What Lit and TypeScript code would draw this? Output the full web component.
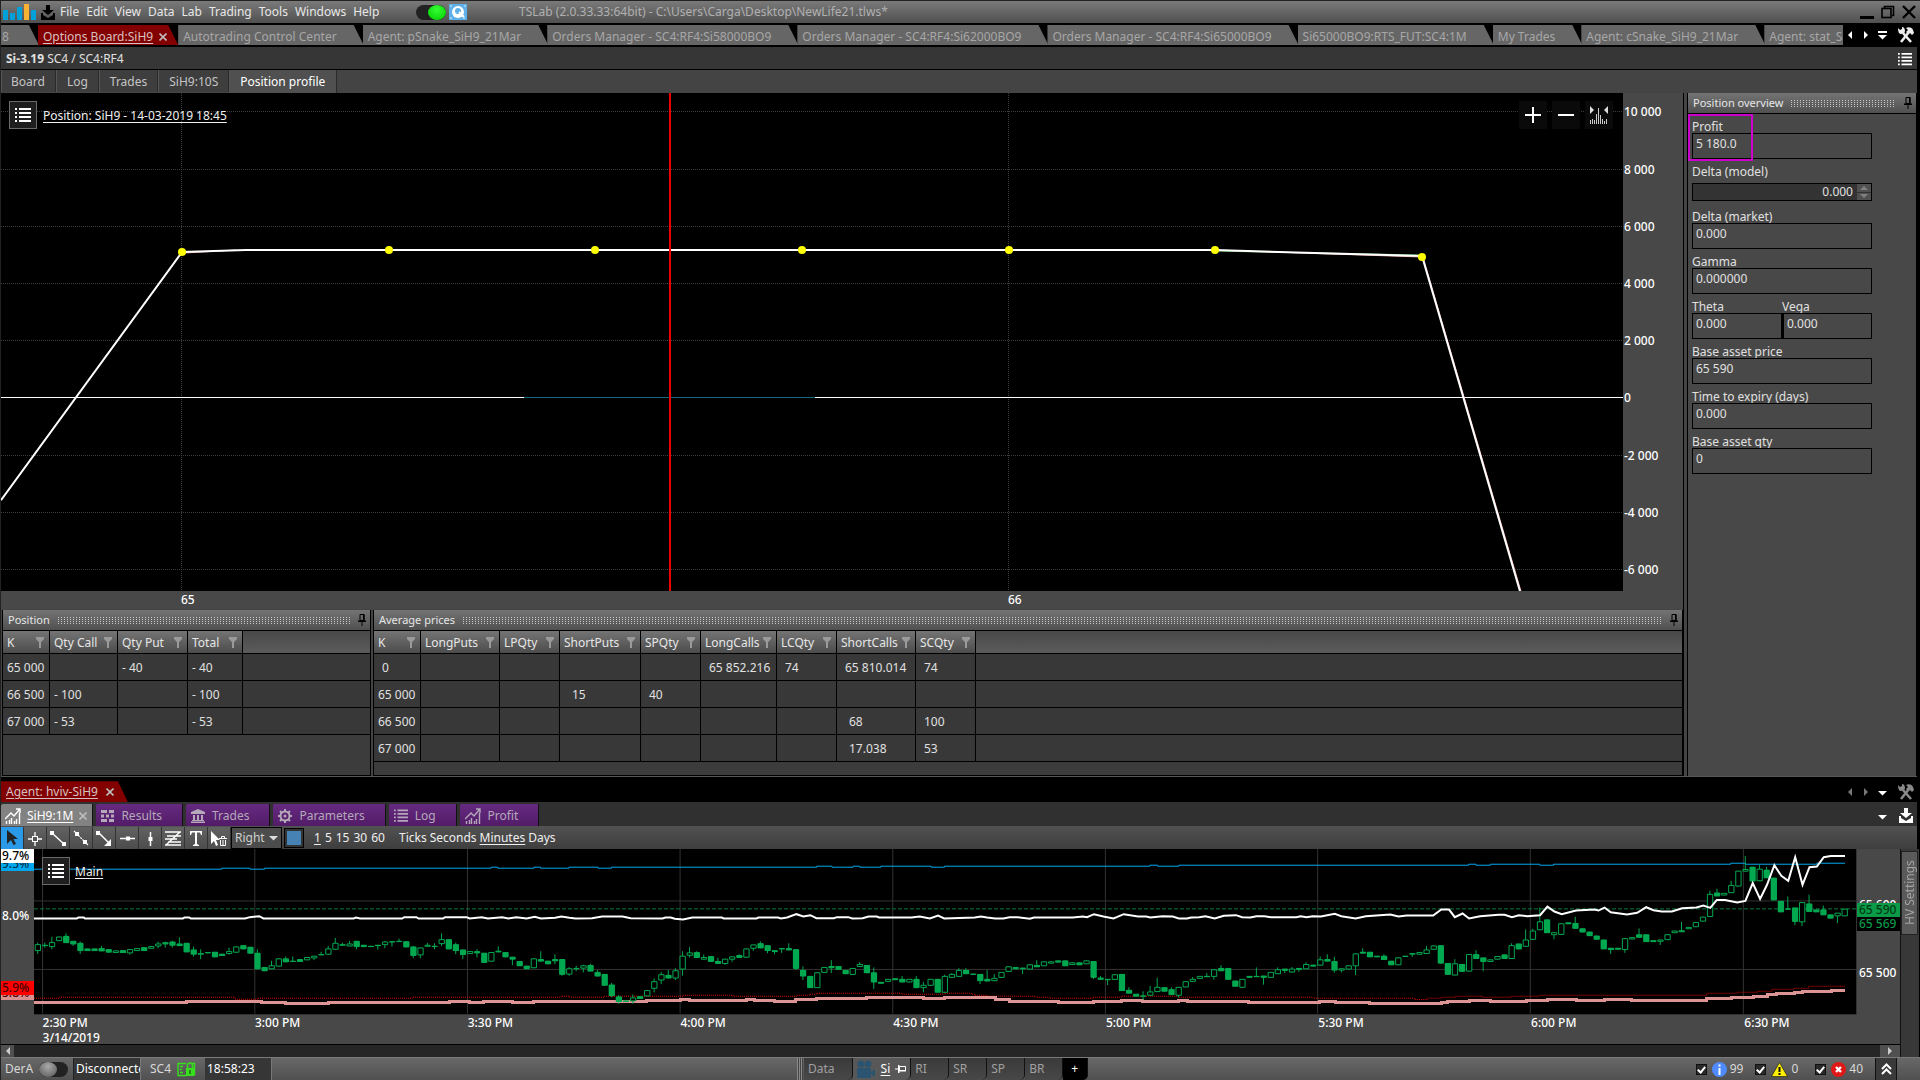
import { LitElement, html, svg, css, nothing } from "lit";
import { customElement, state } from "lit/decorators.js";
import { classMap } from "lit/directives/class-map.js";
import { styleMap } from "lit/directives/style-map.js";

/* ---------- icons ---------- */

const icon = (name: string, w: number, h: number, body: unknown, box = `0 0 ${w} ${h}`) =>
  html`<svg class="ic ic-${name}" width=${w} height=${h} viewBox=${box} aria-hidden="true">${body}</svg>`;

const icons = {
  logo: () => icon("logo", 33, 20, svg`
    <rect x="0" y="8" width="5" height="10" fill="#00a0d8"/>
    <rect x="7" y="11" width="5" height="7" fill="#00a0d8"/>
    <rect x="14" y="5" width="5" height="13" fill="#00a0d8"/>
    <rect x="21" y="2" width="5" height="16" fill="#f9b233"/>
    <rect x="28" y="8" width="5" height="10" fill="#00a0d8"/>`),
  save: (c: string) => icon("save", 14, 15, svg`
    <path fill=${c} d="M5 0h4v5h4L7 10 1 5h4zM0 8h2v2l5 3 5-3V8h2v7H0z"/>`),
  camera: () => icon("camera", 18, 16, svg`
    <rect width="18" height="16" fill="#5fb0e8"/>
    <circle cx="9" cy="8" r="6" fill="#fff"/><circle cx="9" cy="7" r="3" fill="#5fb0e8"/>
    <path d="M10 8l5 5" stroke="#fff" stroke-width="2"/>
    <path d="M1 2h2M15 2h2M1 14h2M14 14h2" stroke="#d8eefc"/>`),
  close: () => icon("close", 8, 8, svg`<path d="M0.5 0.5l7 7M7.5 0.5l-7 7" stroke="#bdbdbd" stroke-width="1.6"/>`),
  min: () => icon("min", 14, 14, svg`<rect y="11" width="14" height="3" fill="#000"/>`),
  restore: () => icon("restore", 14, 14, svg`
    <path d="M3.5 3V1.5h9v9H11" fill="none" stroke="#000" stroke-width="1.6"/>
    <rect x="1" y="3.5" width="9" height="9" fill="none" stroke="#000" stroke-width="1.6"/>`),
  exit: () => icon("exit", 14, 14, svg`<path d="M1 1l12 12M13 1L1 13" stroke="#000" stroke-width="2.4"/>`),
  left: (c: string) => icon("left", 4, 8, svg`<path d="M4 0v8L0 4z" fill=${c}/>`),
  right: (c: string) => icon("right", 4, 8, svg`<path d="M0 0v8l4-4z" fill=${c}/>`),
  down: (c: string, bar = false) => icon("down", 9, 9, svg`
    ${bar ? svg`<rect y="0" width="9" height="2" fill=${c}/>` : nothing}
    <path d="M0 4h9L4.500 8.500z" fill=${c}/>`),
  tools: (c: string) => icon("tools", 18, 16, svg`
    <path d="M6 6l8 9" stroke=${c} stroke-width="2.6"/>
    <path d="M12 5L4 15" stroke=${c} stroke-width="2.6"/>
    <path d="M1 1l2 2 2-1V0c2 0 3 2 3 4S6 7 4 7 1 5 1 1z" fill=${c}/>
    <path d="M9 1c3-1.500 6-.5 7 2l1 3-2 2-2-2-2 1-2-2 2-2z" fill=${c}/>`),
  list: (c: string, w = 16, h = 14) => icon("list", w, h, svg`
    <path fill=${c} d="M0 0h2v2H0zM4 0h12v2H4zM0 4h2v2H0zM4 4h12v2H4zM0 8h2v2H0zM4 8h12v2H4zM0 12h2v2H0zM4 12h12v2H4z"/>`, "0 0 16 14"),
  pin: () => icon("pin", 8, 12, svg`
    <path d="M2 .5h4v6H2z" fill="none" stroke="#000"/><path d="M5 0h1.500v7H5zM0 6.500h8v1.500H0zM3.500 8h1v4h-1z" fill="#000"/>`),
  pinSide: () => icon("pinSide", 11, 8, svg`
    <path d="M4.500 1.500h6v4h-6z" fill="none" stroke="#fff"/><path d="M4 5h7v1.500H4zM3 0h1.500v8H3zM0 3.500h3v1H0z" fill="#fff"/>`),
  funnel: () => icon("funnel", 8, 11, svg`<path d="M0 0h8v2L5 5v6H3V5L0 2z" fill="#9a9a9a"/>`),
  plus: () => icon("plus", 16, 16, svg`<path d="M7 0h2v7h7v2H9v7H7V9H0V7h7z" fill="#fff"/>`),
  minus: () => icon("minus", 16, 16, svg`<path d="M0 7h16v2H0z" fill="#fff"/>`),
  fit: () => icon("fit", 18, 18, svg`
    <path d="M0 0v8l4-4zM18 0v8l-4-4z" fill="#ddd"/>
    <path d="M.5 18v-4M2.500 18v-5M4.500 18v-4M6.500 18V8M8.500 18V2M10.500 18V9M12.500 18v-5M14.500 18v-3M16.500 18v-5" stroke="#ccc"/>`),
  chart: (c: string) => icon("chart", 16, 16, svg`
    <path d="M0 11l6-6 3 3 6-7M11 1h4v4" fill="none" stroke=${c} stroke-width="1.400"/>
    <path d="M1.500 16v-3M4.500 16v-4M6.500 16v-6M9.500 16v-3M11.500 16v-5M14.500 16V5" stroke=${c} stroke-width="1.400"/>`),
  blocks: () => icon("blocks", 13, 12, svg`
    <path fill="#b4a8ba" d="M0 0h6v3H0zM8 0h5v3H8zM0 4.500h3v3H0zM5 4.500h3v3H5zM10 4.500h3v3h-3zM0 9h6v3H0zM8 9h5v3H8z"/>`),
  bank: () => icon("bank", 14, 14, svg`
    <path fill="#b4a8ba" d="M7 0l7 3v2H0V3zM2 6h2v5H2zM6 6h2v5H6zM10 6h2v5h-2zM1 11h12v1H1zM0 12.500h14V14H0z"/>`),
  gear: () => icon("gear", 14, 14, svg`
    <circle cx="7" cy="7" r="4.500" fill="none" stroke="#b4a8ba" stroke-width="2"/><circle cx="7" cy="7" r="1.500" fill="#b4a8ba"/>
    <path d="M7 0v3M7 11v3M0 7h3M11 7h3M2 2l2 2M10 10l2 2M12 2l-2 2M4 10l-2 2" stroke="#b4a8ba" stroke-width="2"/>`),
  film: () => icon("film", 20, 18, svg`
    <circle cx="5" cy="4" r="3.500" fill="#2a5470"/><circle cx="12" cy="4" r="3.500" fill="#2a5470"/>
    <path d="M1 8h14v10H1zM15 12l4-3v8l-4-3z" fill="#2a5470"/>`),
  lock: () => icon("lock", 19, 15, svg`
    <path d="M9 1.500H1v12h8M3 4.500h3M3 7.500h2M3 10.500h3M17.500 13.500V1.500H15" fill="none" stroke="#37e01c" stroke-width="1.400"/>
    <path d="M9 6h8v8H9z" fill="#37e01c"/><path d="M10.500 6V3.500C10.500 0 15.500 0 15.500 3.500V6" fill="none" stroke="#37e01c" stroke-width="1.500"/>
    <path d="M13 8v4" stroke="#222"/>`),
  info: () => icon("info", 15, 15, svg`
    <circle cx="7.500" cy="7.500" r="7.500" fill="#4f8bff"/><path d="M6.500 2.500h2v2h-2zM6.500 6h2v7h-2z" fill="#fff"/>`),
  warn: () => icon("warn", 17, 15, svg`
    <path d="M8.500 0.500L16.500 14.500H.5z" fill="#ffef00" stroke="#111" stroke-width=".6"/><path d="M7.500 5h2v5h-2zM7.500 11h2v2h-2z" fill="#111"/>`),
  error: () => icon("error", 15, 15, svg`
    <circle cx="7.500" cy="7.500" r="7.500" fill="#e01818"/><path d="M5 5l5 5M10 5l-5 5" stroke="#fff" stroke-width="2.400"/>`),
  up: () => icon("up", 11, 12, svg`<path d="M1 6l4.500-4.500L10 6M1 11l4.500-4.500L10 11" fill="none" stroke="#fff" stroke-width="2"/>`),
};

const drawTools = [
  ["Select", svg`<path d="M6 3v14l4-4 2.500 5 2.500-1-2.500-5H17z" fill="#222"/>`],
  ["Crosshair", svg`<path d="M11 5v4M11 15v4M4 12h4M14 12h4" stroke="#fff" stroke-width="1.300"/><rect x="8.500" y="9.500" width="5" height="5" fill="none" stroke="#fff"/>`],
  ["Segment", svg`<path d="M5 6l13 12" stroke="#fff" stroke-width="1.500"/><path d="M3 4h4v4H3zM15 15h4v4h-4z" fill="#fff"/>`],
  ["Line", svg`<path d="M4 4l14 14" stroke="#fff" stroke-width="1.200" stroke-dasharray="2 1"/><path d="M5 5h4v4H5zM13 13h4v4h-4z" fill="#fff"/>`],
  ["Ray", svg`<path d="M5 5l12 12" stroke="#fff" stroke-width="1.500"/><path d="M3 4h4v4H3zM18 12v7h-7z" fill="#fff"/>`],
  ["Horizontal line", svg`<path d="M4 11.500h15" stroke="#fff" stroke-width="1.500"/><rect x="10" y="9.500" width="4" height="4" fill="#fff"/>`],
  ["Vertical line", svg`<path d="M11.500 5v14" stroke="#fff" stroke-width="1.500"/><rect x="9.500" y="10" width="4" height="4" fill="#fff"/>`],
  ["Fibonacci", svg`<path d="M3 5h16M5 9h14M3 12h12M6 15h13M3 18h16M4 18L18 5" stroke="#fff" stroke-width="1.500"/>`],
  ["Text", svg`<path d="M5 4h12v4h-1l-1-2.500h-3V17l2 1v1H8v-1l2-1V5.500H7L6 8H5z" fill="#fff"/>`],
  ["Delete drawings", svg`<path d="M3 4v13l3-3 2 5 2-1-2-5h4z" fill="#fff"/><path d="M11 11.500h8M13.500 11V9.500h3V11M12.500 13v5.500h5V13M15 13v5" fill="none" stroke="#fff"/>`],
] as const;

/* ---------- data ---------- */

const menus = ["File", "Edit", "View", "Data", "Lab", "Trading", "Tools", "Windows", "Help"];
const docTabs = [
  "8", "Options Board:SiH9", "Autotrading Control Center", "Agent: pSnake_SiH9_21Mar",
  "Orders Manager - SC4:RF4:Si58000BO9", "Orders Manager - SC4:RF4:Si62000BO9",
  "Orders Manager - SC4:RF4:Si65000BO9", "Si65000BO9:RTS_FUT:SC4:1M", "My Trades",
  "Agent: cSnake_SiH9_21Mar", "Agent: stat_SiH9",
];
const boardTabs = ["Board", "Log", "Trades", "SiH9:10S", "Position profile"];

const positionCols: [string, string][] = [["K", "w46"], ["Qty Call", "w68"], ["Qty Put", "w70"], ["Total", "w55"]];
const positionRows = [
  ["65 000", "", "- 40", "- 40"],
  ["66 500", "- 100", "", "- 100"],
  ["67 000", "- 53", "", "- 53"],
];
const priceCols: [string, string][] = [
  ["K", "w46"], ["LongPuts", "w79"], ["LPQty", "w60"], ["ShortPuts", "w81"], ["SPQty", "w60"],
  ["LongCalls", "w76"], ["LCQty", "w60"], ["ShortCalls", "w79"], ["SCQty", "w60"],
];
const priceRows = [
  ["0", "", "", "", "", "65 852.216", "74", "65 810.014", "74"],
  ["65 000", "", "", "15", "40", "", "", "", ""],
  ["66 500", "", "", "", "", "", "", "68", "100"],
  ["67 000", "", "", "", "", "", "", "17.038", "53"],
];

/* Profile chart: the drawing area is 1622 x 498 units. */
const PW = 1622;
const PH = 498;
const profileY: [string, number][] = [
  ["10 000", 18], ["8 000", 76], ["6 000", 133], ["4 000", 190], ["2 000", 247],
  ["0", 304], ["-2 000", 362], ["-4 000", 419], ["-6 000", 476],
];
const profileX: [string, number][] = [["65", 180], ["66", 1007]];
const strikes: [number, number][] = [
  [181, 159], [388, 157], [594, 157], [801, 157], [1008, 157], [1214, 157], [1421, 164],
];

/* Price chart: x runs from 83 to 4547, y from 237 to 735 (downwards). */
const X0 = 83, X1 = 4547, Y0 = 237, Y1 = 735;
const STEP = 17.36;
/* One candle per minute: H hollow / F filled, then body top, body bottom, high, low. */
const candles = `H525,545,520,554 F527,530,520,535 H519,533,502,540 H502,515 F500,521,492 F515,525,515,530 F521,545,517,554 F538,545 F538,545 F537,546,530
F540,550 H544,551 F543,551 H540,552,540,556 H537,545 F534,545 H531,538 H523,531,517,537 F519,525,517,535 F517,529,514,535
F523,530,504 F521,549 F541,556,532,562 F552,556,540,570 F549,552 F548,564 F554,560 H546,554,535,556 H532,550 F528,540
F533,553 F551,600,540 F594,606 H589,600,575 H568,592 F568,579,562 F575,577,562 F570,578 H564,573 H560,567,560,573
F555,557,548 H538,556,530 H521,541,506 F525,529,520 H523,531,515 F515,533,515,540 F527,533 F530,533 F527,530,527,541 H517,527,515,537
F516,519,516,532 H515,518,508 F516,534 F532,560,530,567 H535,558,535,567 H527,532,521 F530,532,522,540 H510,524,492,530 F510,540 F525,545,520,555
F541,557,541,570 H546,554 F546,552,540,565 F551,581 H549,577 F545,549,531 F549,564 F563,571,563,588 F576,591 F590,600
H568,597 F570,577,546 F575,585 F570,576,555,585 F570,617,570,620 H598,616,594,620 F597,600,590,606 H589,598,587,610 F588,607,584 F609,622,603
F615,650 F647,681,642,685 F683,699,678,705 F695,699 H686,697,677,705 F682,690 H664,682 H637,659,628,670 H616,634,609,645 F618,628,603
H604,628,597,633 H560,601,546,620 H550,559,534,565 F549,566,546 H564,571,556 F561,578 F576,584,566 H569,584,569,587 H562,571,562,578 F558,566,555
H538,565 H526,538,526,545 F522,537,516 F528,545,528,552 F543,548,543,555 F537,540,537,551 F537,543,522 F540,599,540,603 F603,622,592,633 F621,657
H610,657 H594,611 F591,597,573,612 F591,602 F603,615 H597,617 H585,593,579 F588,612 F610,640,595,660 F639,644
H630,638 F628,633 F630,640,621 H630,640 F630,657,621 H648,657,639,670 H630,650 F630,671 H621,671,617 H615,626,612
H603,623,597 F603,615,597 F614,617 F615,636,615,645 F630,637,603 H627,636,615 H609,626 H592,608 F594,600 F596,600,596,615
H586,601 F588,594,573 H577,591 H577,583 F574,580 F574,591 H580,587 F580,588 H574,585 F576,626,576,630
F626,632,621 F630,633,630,648 H616,632 F615,666 F663,674,655 F675,683 F680,682,667,693 H668,680,651 H654,669,626 F655,668
F661,678,655 H654,680,654,686 H637,655 H630,638,624 H621,629 F621,624,612 H601,623,601,632 F597,606,588 F597,632 F635,653
H630,656 F621,626 F621,624,595 F620,626,620,647 H609,626 H601,615,595 F599,605,599,612 H599,610,594 F597,602,597,608 H585,600,580
F587,592 H571,589,562 F570,577,555 F576,604,563,611 H598,604,598,610 H589,601 H553,591,553,618 F548,553,537 F548,564 F560,564
F560,572,555 F575,588 H565,588 F560,563 F552,556,552,563 H549,556 H541,554,530 H529,541 F528,583 F582,617
H583,619,570 F585,608 H555,607 F555,569,543 F565,578,565,606 H571,578 H561,571 F556,569 H528,569,522 F523,540
H511,532,480 H484,511,478 H456,482,414 F450,491 H489,497,489,510 H462,496 F459,464 F461,478,442 F477,489 F487,500
F499,511 F511,540 F536,542,536,554 F536,541 H507,542,507,551 H504,510 F495,505,477 F495,518 F513,518 H511,517,511,527
H495,512 H484,491 F483,488,457 H473,479 H458,473 H442,456 H373,442,363 F369,380,357 H370,377 H346,370,333
H303,350 H298,305,258 F291,335 H297,334,285 F300,325,291 F324,392 F394,428 F417,420,381 F414,457,414,467 H398,458,398,470
F402,427,375 F420,428 F420,437,408 F435,447 H430,440,430,461 H418,440`
  .trim().split(/\s+/).map((t) => {
    const [top, bottom, high, low] = t.slice(1).split(",").map(Number);
    return { hollow: t[0] === "H", top, bottom, high: high ?? top, low: low ?? bottom };
  });

/* Step series: each entry is the x where the level ends and the level itself. */
const steps = (spec: string) => {
  let x = X0;
  const pts: string[] = [];
  for (const item of spec.trim().split(/\s+/)) {
    const [end, level] = item.split(",").map(Number);
    pts.push(`${x},${level}`, `${end},${level}`);
    x = end;
  }
  return pts.join(" ");
};
const upper = steps(`543,298 612,295 648,298 1203,295 1219,292 1308,295 1324,292 1394,295 1465,292 1498,295 2001,292 2038,289
2090,292 2106,289 2158,292 2281,289 2314,292 2817,289 2836,286 2888,289 3598,286 3616,283 3651,286 3772,283 3806,286 4240,283 4276,280 4451,283 4520,280`);
const lowerDots = steps(`145,688 575,685 632,691 1010,688 1375,685 1395,682 1480,685 1673,682 1796,679 1953,682 1983,679 2000,676 2208,673
2313,676 2380,673 2388,676 2418,679 2538,682 2573,685 2678,688 2748,685 2888,682 3218,685 3466,688 3496,692 3531,688 3566,685 3631,682 3701,685
3771,682 4181,679 4256,673 4306,670 4341,667 4396,661 4431,658 4520,652`);
const lowerBand = steps(`456,701 640,698 700,701 805,704 1100,701 1150,698 1185,701 1255,698 1308,701 1325,698 1583,698 1668,694 1688,691 1828,694
1848,691 1898,694 1948,698 2001,691 2123,688 2263,685 2313,688 2438,685 2473,691 2593,698 2678,701 2748,698 2798,694 2888,698 2908,694 3058,698
3233,701 3271,697 3356,701 3531,704 3546,701 3599,697 3651,694 3739,698 3791,694 3861,691 3931,694 3996,691 4181,694 4241,688 4296,685 4331,682 4351,678
4396,674 4416,672 4486,667 4520,664`);
const middle = `83,447 188,447 192,444 205,444 208,447 448,447 452,444 463,444 467,447 600,447 612,443 635,440 645,447 866,447 872,444 882,447
985,447 990,443 1020,443 1025,447 1085,447 1090,443 1143,443 1150,447 1180,443 1195,447 1230,443 1245,447 1265,443 1290,447 1310,442 1325,447
1360,445 1375,441 1395,445 1410,447 1450,446 1475,441 1525,441 1545,446 1623,447 1630,444 1643,444 1653,448 1673,450 1696,444 1768,444 1773,447
1853,447 1858,444 1906,444 1913,447 1928,444 1951,434 1968,441 1985,437 2000,446 2043,446 2050,443 2078,443 2088,447 2113,446 2128,441 2148,441
2153,444 2233,444 2253,441 2278,447 2298,438 2313,447 2388,444 2403,441 2418,444 2438,447 2458,447 2473,443 2493,443 2523,448 2533,444 2628,444
2653,441 2663,443 2680,434 2703,441 2728,447 2753,434 2788,441 2808,441 2818,444 2848,440 2873,441 2888,447 2908,447 2918,444 2938,443 2953,440
2976,447 2998,439 3028,437 3043,443 3063,444 3078,440 3098,440 3113,443 3176,443 3186,440 3201,443 3216,440 3236,441 3270,433 3286,440 3321,447
3346,440 3406,435 3426,441 3446,438 3511,438 3531,420 3550,420 3564,443 3583,432 3599,447 3626,440 3671,436 3686,436 3704,443 3721,437 3741,440
3773,437 3791,411 3808,426 3826,434 3861,423 3906,420 3916,423 3931,414 3946,428 3986,435 4011,430 4033,413 4051,422 4071,426 4096,426 4121,416
4156,414 4173,408 4190,415 4206,391 4226,391 4256,399 4276,394 4294,340 4312,388 4329,345 4347,286 4364,318 4381,333 4398,262 4416,345 4433,292
4451,290 4468,262 4485,258 4520,258`;
const hours: [string, number][] = [
  ["2:30 PM", 104], ["3:00 PM", 624], ["3:30 PM", 1145], ["4:00 PM", 1666], ["4:30 PM", 2187],
  ["5:00 PM", 2708], ["5:30 PM", 3228], ["6:00 PM", 3749], ["6:30 PM", 4271],
];

const pct = (v: number, from: number, to: number) => `${(((v - from) / (to - from)) * 100).toFixed(3)}%`;

/* ---------- shared styles ---------- */

const base = css`
  * { box-sizing: border-box; }
  button, input, select {
    font: inherit; color: inherit; background: none; border: 0; padding: 0; margin: 0; border-radius: 0;
  }
  button { cursor: pointer; display: flex; align-items: center; }
  a { color: inherit; text-decoration: none; }
  svg { display: block; flex: none; }
  .dock-head {
    height: 21px; flex: none; display: flex; align-items: center; gap: 8px; padding: 0 4px 0 5px;
    background: linear-gradient(#747474, #505050); border-bottom: 1px solid #000; font-size: 11px; color: #e6e6e6;
  }
  .grip {
    flex: 1; min-width: 0; height: 7px;
    background: repeating-linear-gradient(90deg, #c8c8c8 0 1px, transparent 1px 3px);
    mask: repeating-linear-gradient(#000 0 1px, transparent 1px 2px);
  }
  .list-btn { width: 28px; height: 28px; border: 1px solid #6a6a6a; background: #1e1e1e; justify-content: center; }
`;

/* ---------- profile chart ---------- */

@customElement("profile-chart")
class ProfileChart extends LitElement {
  static styles = [base, css`
    :host { display: grid; grid-template: minmax(0, 1fr) 18px / minmax(0, 1fr) 60px; background: #484848; }
    .plot { position: relative; background: #000; }
    .plot > svg { position: absolute; inset: 0; width: 100%; height: 100%; }
    .plot path, .plot line { vector-effect: non-scaling-stroke; }
    .axis { position: relative; color: #fff; font-weight: 500; }
    .y span { position: absolute; left: 1px; line-height: 16px; margin-top: -7px; white-space: nowrap; }
    .x span { position: absolute; top: 1px; line-height: 16px; white-space: nowrap; }
    .title { position: absolute; left: 8px; top: 8px; display: flex; align-items: center; gap: 6px; color: #f0f0f0; }
    .title a { text-decoration: underline; text-underline-offset: 2px; padding-top: 2px; }
    .zoom { position: absolute; right: 10px; top: 8px; display: flex; gap: 5px; }
    .zoom button { width: 28px; height: 28px; background: #0a0a0a; justify-content: center; }
  `];

  render() {
    return html`
      <div class="plot">
        <svg viewBox="0 0 ${PW} ${PH}" preserveAspectRatio="none" role="img" aria-label="Position profile">
          ${profileY.map(([, y]) => svg`<line x1="0" x2=${PW} y1=${y + 0.5} y2=${y + 0.5} stroke="#3c3c3c" stroke-dasharray="1 1" shape-rendering="crispEdges"/>`)}
          ${profileX.map(([, x]) => svg`<line y1="0" y2=${PH} x1=${x + 0.5} x2=${x + 0.5} stroke="#3c3c3c" stroke-dasharray="1 1" shape-rendering="crispEdges"/>`)}
          <path d="M0 304.500H${PW}" stroke="#fff" shape-rendering="crispEdges"/>
          <path d="M523 304.500H814" stroke="#106878" shape-rendering="crispEdges"/>
          <path d="M1215 158L1422 162" stroke="#4caf50" fill="none"/>
          <path d="M182 160L235 157M1215 157L1422 164L1520 498" stroke="#e79a9a" fill="none"/>
          <path d="M0 407L181 159L245 157H1214L1421 163L1519 498" stroke="#fff" stroke-width="2" fill="none"/>
          <path d="M669 0V${PH}" stroke="#f00000" stroke-width="2" shape-rendering="crispEdges"/>
          ${strikes.map(([x, y]) => svg`<circle cx=${x} cy=${y} r="4" fill="#ff0"/>`)}
        </svg>
        <div class="title">
          <button class="list-btn" aria-label="Series list">${icons.list("#fff")}</button>
          <a href="#position">Position: SiH9 - 14-03-2019 18:45</a>
        </div>
        <div class="zoom">
          <button aria-label="Zoom in">${icons.plus()}</button>
          <button aria-label="Zoom out">${icons.minus()}</button>
          <button aria-label="Fit">${icons.fit()}</button>
        </div>
      </div>
      <div class="axis y">${profileY.map(([t, y]) => html`<span style=${styleMap({ top: pct(y, 0, PH) })}>${t}</span>`)}</div>
      <div class="axis x">${profileX.map(([t, x]) => html`<span style=${styleMap({ left: pct(x, 0, PW) })}>${t}</span>`)}</div>
    `;
  }
}

/* ---------- price chart ---------- */

@customElement("price-chart")
class PriceChart extends LitElement {
  static styles = [base, css`
    :host { display: grid; grid-template: minmax(0, 1fr) 29px / 33px minmax(0, 1fr) 43px; background: #484848; border-bottom: 1px solid #000; }
    .plot { position: relative; background: #000; border-right: 1px solid #333; border-bottom: 1px solid #333; }
    .plot > svg { position: absolute; inset: 0; width: 100%; height: 100%; }
    .plot svg * { vector-effect: non-scaling-stroke; }
    .side { position: relative; color: #fff; font-weight: 500; overflow: hidden; }
    .side span { position: absolute; left: 0; right: 0; height: 14px; line-height: 14px; margin-top: -7px; padding-left: 2px; white-space: nowrap; }
    .left span { padding-left: 1px; }
    .white { background: #fff; color: #000; }
    .blue { background: #00a8f0; color: #00324a; }
    .red { background: #f00; color: #400; }
    .pink { background: #d89090; color: #400; }
    .green { background: #0a9a48; color: #003c14; }
    .quote { background: #000; color: #0a9a48; }
    .times { grid-column: 2; position: relative; color: #fff; font-weight: 500; }
    .times span { position: absolute; top: 0; line-height: 15px; white-space: nowrap; }
    .title { position: absolute; left: 8px; top: 8px; display: flex; align-items: center; gap: 5px; color: #f0f0f0; }
    .title a { text-decoration: underline; text-underline-offset: 2px; padding-top: 2px; }
  `];

  render() {
    const label = (cls: string, y: number, text: string) =>
      html`<span class=${cls} style=${styleMap({ top: pct(y, Y0, Y1) })}>${text}</span>`;
    return html`
      <div class="side left">
        ${label("blue", 281, "9.5%")}${label("white", 258, "9.7%")}${label("", 438, "8.0%")}
        ${label("pink", 669, "5.8%")}${label("red", 655, "5.9%")}
      </div>
      <div class="plot">
        <svg viewBox="${X0} ${Y0} ${X1 - X0} ${Y1 - Y0}" preserveAspectRatio="none" role="img" aria-label="SiH9 one minute chart">
          <g shape-rendering="crispEdges" fill="none">
            ${hours.map(([, x]) => svg`<path d="M${x} ${Y0}V${Y1}" stroke="#333"/>`)}
            <path d="M${X0} 394H${X1}M${X0} 601H${X1}" stroke="#333"/>
            <path d="M${X0} 418H${X1}" stroke="#0a7a3c" stroke-dasharray="4 2"/>
            <polyline points=${upper} stroke="#00a8f0"/>
            <polyline points=${lowerDots} stroke="#e00000" stroke-dasharray="1 1"/>
            <polyline points=${lowerBand} stroke="#dc9494" stroke-width="3"/>
            ${candles.map((c, i) => {
              const x = 92 + i * STEP;
              return svg`<path d="M${x} ${c.high}V${c.low}" stroke="#00a850"/>
                <rect x=${x - 6} y=${c.top + 1} width="13" height=${Math.max(c.bottom - c.top - 2, 1)}
                  stroke="#00a850" fill=${c.hollow ? "#000" : "#00a850"}/>`;
            })}
          </g>
          <polyline points=${middle} stroke="#fff" stroke-width="2" fill="none"/>
        </svg>
        <div class="title">
          <button class="list-btn" aria-label="Series list">${icons.list("#fff")}</button>
          <a href="#main">Main</a>
        </div>
      </div>
      <div class="side">
        ${label("", 406, "65 600")}${label("quote", 463, "65 569")}${label("green", 421, "65 590")}${label("", 608, "65 500")}
      </div>
      <div class="times">
        ${hours.map(([t, x], i) => html`<span style=${styleMap({ left: pct(x, X0, X1) })}>${t}${i === 0 ? html`<br>3/14/2019` : nothing}</span>`)}
      </div>
    `;
  }
}

/* ---------- docked grid ---------- */

@customElement("dock-grid")
class DockGrid extends LitElement {
  static properties = { heading: {}, cols: { attribute: false }, rows: { attribute: false }, indent: { type: Boolean } };
  declare heading: string;
  declare cols: [string, string][];
  declare rows: string[][];
  declare indent: boolean;

  static styles = [base, css`
    :host { display: flex; flex-direction: column; background: #3c3c3c; border: 1px solid #000; border-top: 0; min-width: 0; }
    table { border-collapse: separate; border-spacing: 0; table-layout: fixed; width: 100%; }
    th, td { border-right: 1px solid #000; border-bottom: 1px solid #000; padding: 1px 0 0 4px; text-align: left; font-weight: 400; white-space: nowrap; overflow: hidden; }
    th { height: 23px; background: linear-gradient(#747474, #4c4c4c); color: #e6e6e6; }
    th:last-child { background: linear-gradient(#484848, #5c5c5c); }
    th:last-child, td:last-child { border-right: 0; }
    td { height: 27px; padding-top: 2px; background: #383838; color: #e0e0e0; }
    .head { display: flex; align-items: center; justify-content: space-between; padding-right: 5px; }
    .pad td { padding-left: 8px; }
    .pad td.strike { padding-left: 4px; }
    .pad td.short { padding-left: 12px; }
    .w46 { width: 47px; } .w55 { width: 55px; } .w60 { width: 60px; } .w68 { width: 68px; }
    .w70 { width: 70px; } .w76 { width: 76px; } .w79 { width: 79px; } .w81 { width: 81px; }
  `];

  render() {
    return html`
      <div class="dock-head"><span>${this.heading}</span><i class="grip"></i><button aria-label="Pin">${icons.pin()}</button></div>
      <table class=${classMap({ pad: this.indent })}>
        <thead><tr>
          ${this.cols.map(([c, w]) => html`<th class=${w}><div class="head">${c}${icons.funnel()}</div></th>`)}<th></th>
        </tr></thead>
        <tbody>
          ${this.rows.map((r) => html`<tr>${r.map((c, i) => html`
            <td class=${classMap({ strike: i === 0 && c.length > 1, short: this.cols[i][0].startsWith("Short") && c.length < 7 })}>${c}</td>`)}<td></td></tr>`)}
        </tbody>
      </table>`;
  }
}

/* ---------- position overview ---------- */

@customElement("position-overview")
class PositionOverview extends LitElement {
  static styles = [base, css`
    :host { display: flex; flex-direction: column; background: #484848; border-right: 1px solid #000; }
    .form { display: grid; grid-template-columns: 90px 90px; padding: 0 4px; position: relative; color: #e0e0e0; }
    .field { display: flex; flex-direction: column; height: 45px; grid-column: span 2; }
    .half { grid-column: span 1; }
    label { line-height: 16px; height: 19px; padding-top: 5px; white-space: nowrap; }
    input { height: 26px; width: 100%; border: 1px solid #000; padding: 0 3px 5px; outline: 0; }
    .half + .half input { border-left-width: 2px; }
    .spin { display: flex; margin-top: 5px; height: 18px; border: 1px solid #000; background: #333; }
    .spin input { border: 0; height: 16px; padding: 0 4px; text-align: right; flex: 1; min-width: 0; }
    .arrows { display: grid; width: 14px; gap: 1px; }
    .arrows button { background: #505050; justify-content: center; color: #808080; }
    .mark { position: absolute; left: 0; top: 0; width: 65px; height: 47px; border: 2px solid #cc00cc; pointer-events: none; }
  `];

  private field(id: string, label: string, value: string, half = false) {
    return html`<div class=${classMap({ field: true, half })}>
      <label for=${id}>${label}</label><input id=${id} readonly .value=${value}></div>`;
  }

  render() {
    return html`
      <div class="dock-head"><span>Position overview</span><i class="grip"></i><button aria-label="Pin">${icons.pin()}</button></div>
      <div class="form">
        ${this.field("profit", "Profit", "5 180.0")}
        <div class="field">
          <label for="delta">Delta (model)</label>
          <div class="spin"><input id="delta" .value=${"0.000"}>
            <div class="arrows">
              <button aria-label="Increase"><svg width="8" height="4"><path d="M0 4h8L4 0z" fill="currentColor"/></svg></button>
              <button aria-label="Decrease"><svg width="8" height="4"><path d="M0 0h8L4 4z" fill="currentColor"/></svg></button>
            </div>
          </div>
        </div>
        ${this.field("market", "Delta (market)", "0.000")}
        ${this.field("gamma", "Gamma", "0.000000")}
        ${this.field("theta", "Theta", "0.000", true)}
        ${this.field("vega", "Vega", "0.000", true)}
        ${this.field("price", "Base asset price", "65 590")}
        ${this.field("expiry", "Time to expiry (days)", "0.000")}
        ${this.field("qty", "Base asset qty", "0")}
        <div class="mark"></div>
      </div>`;
  }
}

/* ---------- application ---------- */

@customElement("app-root")
class AppRoot extends LitElement {
  @state() private drawTool = "Select";

  static styles = [base, css`
    :host {
      display: flex; flex-direction: column; height: 100vh; overflow: hidden; background: #000; color: #d8d8d8;
      font: 12px/16px "Noto Sans", "Liberation Sans", sans-serif; border-left: 1px solid #222;
    }
    header { height: 25px; flex: none; display: grid; grid-template-columns: 518px 1fr auto; align-items: center;
      background: linear-gradient(#7a7a7a, #505050); border-top: 1px solid #222; border-bottom: 2px solid #000; }
    .lead { display: flex; align-items: center; padding-left: 2px; }
    .lead .ic-save { margin: 0 5px; }
    nav { display: flex; gap: 7px; color: #e8e8e8; }
    .switch { appearance: none; width: 30px; height: 15px; border-radius: 8px; background: #222; margin: 0; display: flex; align-items: center; cursor: pointer; }
    .switch::before { content: ""; width: 18px; height: 15px; border-radius: 50%; background: radial-gradient(circle at 50% 30%, #aaa, #555); }
    .switch:checked { justify-content: flex-end; }
    .switch:checked::before { background: radial-gradient(circle at 50% 30%, #3f3, #0c0); }
    .lead .switch { margin: 0 3px 0 37px; }
    .title { color: #b0b0b0; }
    .win { display: flex; gap: 7px; padding-right: 4px; }

    .docs { display: flex; height: 22px; flex: none; padding-bottom: 2px; align-items: stretch; background: #000; }
    .tabs { display: flex; flex: 1; min-width: 0; overflow: hidden; }
    .doc { background: #666; color: #a6a6a6; padding: 4px 27px 0 5px; margin-right: -1px; white-space: nowrap; flex: none;
      clip-path: polygon(0 0, calc(100% - 10px) 0, 100% 100%, 0 100%); gap: 6px; }
    .doc:first-child { padding-left: 1px; padding-right: 30px; }
    .doc.on { background: #820000; color: #d8c0c0; padding-right: 11px; margin-right: 0; }
    .doc.on span { text-decoration: underline; text-underline-offset: 2px; }
    .tail { display: flex; align-items: center; gap: 12px; padding: 0 5px; flex: none; }
    .tail .ic-down { margin: 0 -2px; }

    .info { height: 23px; flex: none; display: flex; align-items: center; justify-content: space-between; padding: 1px 5px 0;
      background: #363636; border-bottom: 1px solid #000; margin-right: 3px; color: #e0e0e0; }
    .info b { font-weight: 700; }
    .pages { height: 23px; flex: none; display: flex; background: #444; margin-right: 3px; }
    .pages button { padding: 1px 10px 0 9px; border-right: 1px solid #2a2a2a; border-left: 1px solid #565656; height: 22px; background: #3e3e3e; color: #c4c4c4; }
    .pages button + button { padding-left: 10px; }
    .pages .on { background: #505050; color: #fff; height: 23px; padding-right: 11px; }

    .work { flex: 684 1 0; min-height: 0; display: grid; grid-template-columns: minmax(0, 1fr) 230px; gap: 3px; margin-right: 3px; background: #444;
      border-bottom: 1px solid #555; }
    .main { display: grid; grid-template-rows: minmax(0, 1fr) 167px; min-width: 0; min-height: 0; border-right: 1px solid #000; background: #444; }
    .docks { display: grid; grid-template-columns: 369px minmax(0, 1fr); gap: 2px; padding: 1px 0 0 1px; }
    position-overview { border-left: 1px solid #000; }

    .docs.low { height: 25px; padding: 4px 0 0; }
    .low .doc { padding: 1px 14px 0 5px; gap: 8px; }
    .views { height: 24px; flex: none; display: flex; gap: 3px; background: #303030; padding-top: 2px; margin-right: 3px; }
    .views a { display: flex; align-items: center; background: linear-gradient(#662a80, #521c68); color: #b4a8ba; padding: 1px 20px 0 5px;
      border-right: 1px solid #111; gap: 7px; border-radius: 2px 0 0 0; }
    .views .on { background: #828282; color: #fff; padding: 1px 5px 0 4px; gap: 6px; }
    .views .on span { text-decoration: underline; text-underline-offset: 2px; }
    .views .end { margin-left: auto; display: flex; align-items: center; gap: 12px; padding-right: 4px; }
    .tools { height: 23px; flex: none; display: flex; align-items: center; background: linear-gradient(#525252, #3e3e3e); color: #f0f0f0; margin-right: 3px; }
    .tools .draw { width: 23px; height: 22px; border-right: 1px solid #333; background: linear-gradient(#626262, #4c4c4c); }
    .tools .draw.on { background: #2a9ae8; }
    .tools label { display: flex; }
    .side-pick { position: relative; border: 1px solid #000; height: 22px; width: 51px; background: #4c4c4c; align-items: center; }
    .side-pick select { appearance: none; width: 100%; height: 20px; padding-left: 3px; line-height: 20px; color: #d0d0d0; outline: 0; }
    .side-pick svg { position: absolute; right: 3px; top: 4px; pointer-events: none; }
    .swatch { width: 20px; height: 20px; border: 1px solid #000; background: #4682b4; box-shadow: inset 0 0 0 2px #333; margin-left: 2px; }
    .set { display: flex; gap: 4px; margin-left: 10px; }
    .set + .set { margin-left: 14px; gap: 3px; }
    .set .on { text-decoration: underline; text-underline-offset: 2px; }

    .lower { flex: 208 1 0; min-height: 0; display: grid; grid-template: minmax(0, 1fr) 12px / minmax(0, 1fr) 19px; margin-right: 1px; background: #303030; }
    .rail { grid-row: 1 / 3; grid-column: 2; padding-top: 2px; background: #383838; border-left: 1px solid #111; }
    .rail button { writing-mode: vertical-rl; transform: rotate(180deg); width: 17px; height: 84px; justify-content: center; background: #5a5a5a; color: #a4a4a4; border: 1px solid #222; }
    .scroll { display: flex; justify-content: space-between; background: #262626; }
    .scroll button { width: 13px; justify-content: center; background: #505050; }
    .scroll button + button { width: 20px; }

    footer { height: 23px; flex: none; display: grid; grid-template-columns: 796px 1fr auto; background: linear-gradient(#686868, #505050); border-top: 1px solid #7a7a7a; }
    .status { display: flex; align-items: center; }
    .status > * { height: 22px; display: flex; align-items: center; }
    .conn { padding: 0 5px 0 4px; gap: 6px; border-right: 1px solid #222; width: 73px; }
    .dark { background: #363636; color: #fff; padding: 0 2px; overflow: hidden; border-right: 1px solid #777; }
    .state { width: 67px; white-space: nowrap; padding-right: 0; }
    .acct { padding: 0 8px 0 9px; gap: 6px; width: 64px; }
    .clock { width: 67px; }
    .spaces { display: flex; }
    .spaces i { width: 6px; background: repeating-linear-gradient(90deg, #8a8a8a 0 1px, #444 1px 2px); margin-right: 1px; }
    .spaces button { min-width: 38px; padding: 0 17px 0 4px; background: linear-gradient(#3a3a3a, #484848); color: #a0a0a0; border-radius: 0 0 5px 0; border-right: 1px solid #111; }
    .spaces button.on { background: #585858; color: #fff; padding: 0 4px 0 3px; gap: 5px; }
    .spaces button.on span { text-decoration: underline; text-underline-offset: 2px; }
    .spaces button:last-child { background: #000; color: #fff; min-width: 25px; padding: 0 8px; }
    .log { display: flex; align-items: center; }
    .log label { display: flex; align-items: center; gap: 3px; margin-right: 12px; }
    .log label:nth-child(2) { margin-right: 17px; }
    .tick { appearance: none; width: 11px; height: 11px; border: 1px solid #111; background: #2a2a2a; display: grid; place-items: center; margin-right: 2px; }
    .tick:checked::before { content: ""; width: 3px; height: 6px; border: solid #fff; border-width: 0 2px 2px 0; transform: rotate(40deg); }
    .more { width: 22px; height: 22px; background: #3a3a3a; border: solid #111; border-width: 0 1px; justify-content: center; margin-right: 23px; }
  `];

  private view(label: string, ic: unknown) {
    return html`<a href="#${label.toLowerCase()}">${ic}<span>${label}</span></a>`;
  }

  render() {
    return html`
      <header>
        <div class="lead">
          ${icons.logo()}${icons.save("#000")}
          <nav>${menus.map((m) => html`<a href="#${m.toLowerCase()}">${m}</a>`)}</nav>
          <input class="switch" type="checkbox" checked aria-label="Trading enabled">${icons.camera()}
        </div>
        <div class="title">TSLab (2.0.33.33:64bit) - C:\\Users\\Carga\\Desktop\\NewLife21.tlws*</div>
        <div class="win">
          <button aria-label="Minimize">${icons.min()}</button>
          <button aria-label="Restore">${icons.restore()}</button>
          <button aria-label="Close">${icons.exit()}</button>
        </div>
      </header>

      <div class="docs">
        <div class="tabs">
          ${docTabs.map((t, i) => html`<button class=${classMap({ doc: true, on: i === 1 })}><span>${t}</span>${i === 1 ? icons.close() : nothing}</button>`)}
        </div>
        <div class="tail">
          <button aria-label="Previous">${icons.left("#fff")}</button><button aria-label="Next">${icons.right("#fff")}</button>
          <button aria-label="All tabs">${icons.down("#fff", true)}</button><button aria-label="Options">${icons.tools("#eee")}</button>
        </div>
      </div>

      <div class="info"><span><b>Si-3.19</b> SC4 / SC4:RF4</span><button aria-label="Menu">${icons.list("#fff", 14, 14)}</button></div>
      <div class="pages">${boardTabs.map((t, i) => html`<button class=${classMap({ on: i === 4 })}>${t}</button>`)}</div>

      <div class="work">
        <div class="main">
          <profile-chart></profile-chart>
          <div class="docks">
            <dock-grid .heading=${"Position"} .cols=${positionCols} .rows=${positionRows}></dock-grid>
            <dock-grid .heading=${"Average prices"} .cols=${priceCols} .rows=${priceRows} .indent=${true}></dock-grid>
          </div>
        </div>
        <position-overview></position-overview>
      </div>

      <div class="docs low">
        <div class="tabs"><button class="doc on"><span>Agent: hviv-SiH9</span>${icons.close()}</button></div>
        <div class="tail">
          <button aria-label="Previous">${icons.left("#777")}</button><button aria-label="Next">${icons.right("#777")}</button>
          <button aria-label="All tabs">${icons.down("#fff")}</button><button aria-label="Options">${icons.tools("#888")}</button>
        </div>
      </div>
      <div class="views">
        <a class="on" href="#chart">${icons.chart("#fff")}<span>SiH9:1M</span>${icons.close()}</a>
        ${this.view("Results", icons.blocks())}${this.view("Trades", icons.bank())}${this.view("Parameters", icons.gear())}
        ${this.view("Log", icons.list("#b4a8ba", 14, 13))}${this.view("Profit", icons.chart("#b4a8ba"))}
        <div class="end"><button aria-label="More">${icons.down("#fff")}</button><button aria-label="Save">${icons.save("#fff")}</button></div>
      </div>
      <div class="tools">
        ${drawTools.map(([name, body]) => html`
          <button class=${classMap({ draw: true, on: this.drawTool === name })} aria-label=${name} @click=${() => (this.drawTool = name)}>
            <svg width="22" height="22" viewBox="0 0 22 22">${body}</svg>
          </button>`)}
        <label class="side-pick"><select aria-label="Axis side"><option>Right</option><option>Left</option></select>${icons.down("#ddd")}</label>
        <button class="swatch" aria-label="Colour"></button>
        <div class="set">${["1", "5", "15", "30", "60"].map((t, i) => html`<a href="#i${t}" class=${i === 0 ? "on" : ""}>${t}</a>`)}</div>
        <div class="set">${["Ticks", "Seconds", "Minutes", "Days"].map((t, i) => html`<a href="#${t}" class=${i === 2 ? "on" : ""}>${t}</a>`)}</div>
      </div>

      <div class="lower">
        <price-chart></price-chart>
        <div class="rail"><button>HV Settings</button></div>
        <div class="scroll"><button aria-label="Scroll left">${icons.left("#ccc")}</button><button aria-label="Scroll right">${icons.right("#ccc")}</button></div>
      </div>

      <footer>
        <div class="status">
          <label class="conn">DerA<input class="switch" type="checkbox"></label>
          <span class="dark state">Disconnected</span>
          <span class="acct">SC4${icons.lock()}</span>
          <span class="dark clock">18:58:23</span>
        </div>
        <div class="spaces">
          <i></i><button>Data</button><button class="on">${icons.film()}<span>Si</span>${icons.pinSide()}</button>
          <button>RI</button><button>SR</button><button>SP</button><button>BR</button><button aria-label="Add workspace">+</button>
        </div>
        <div class="log">
          <label><input class="tick" type="checkbox" checked>${icons.info()}99</label>
          <label><input class="tick" type="checkbox" checked>${icons.warn()}0</label>
          <label><input class="tick" type="checkbox" checked>${icons.error()}40</label>
          <button class="more" aria-label="Expand">${icons.up()}</button>
        </div>
      </footer>
    `;
  }
}
